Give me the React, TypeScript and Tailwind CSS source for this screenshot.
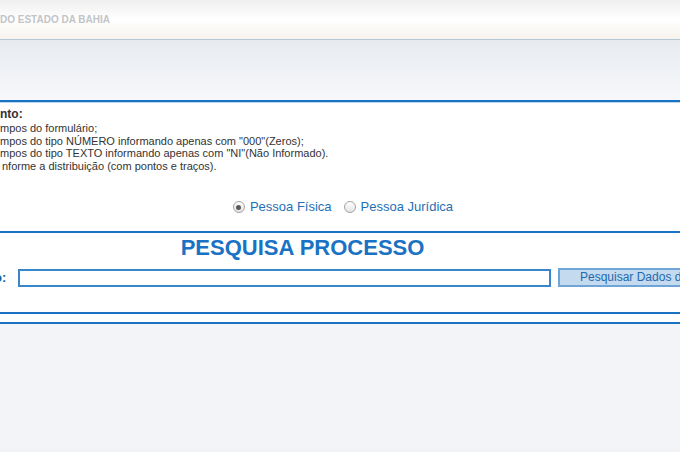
function Radio({ checked }: { checked?: boolean }) {
  return (
    <span className="flex h-[12px] w-[12px] shrink-0 items-center justify-center rounded-full border border-[#a3a3a3] bg-gradient-to-b from-white to-[#e4e4e4]">
      {checked && <span className="h-[5px] w-[5px] rounded-full bg-[#5a5a5a]" />}
    </span>
  );
}

export default function App() {
  return (
    <div className="h-[452px] w-[680px] overflow-hidden bg-gradient-to-b from-[#f8f9fd] to-[#f2f3f7] font-['Liberation_Sans',Arial,sans-serif]">
      <header className="flex h-[39px] items-center bg-gradient-to-b from-[#efefef] via-white to-[#f6f3ee]">
        <span className="whitespace-nowrap text-[10px] font-bold text-[#c2c4c8]">DO ESTADO DA BAHIA</span>
      </header>
      <div className="h-[1px] bg-[#b6c6d3]" />
      <div className="h-[60px] bg-gradient-to-b from-[#e7ebf0] to-[#f7f8fb]" />

      <main className="bg-white">
        <div className="h-[2px] bg-[#1a72c2]" />
        <div className="h-px bg-[#b9d6ee]" />

        <section className="whitespace-nowrap pt-[4px] text-[#333]">
          <p className="text-[12px] font-bold leading-[15px]">nto:</p>
          <ul className="text-[11px] leading-[12.5px]">
            <li>mpos do formulário;</li>
            <li>mpos do tipo NÚMERO informando apenas com "000"(Zeros);</li>
            <li>mpos do tipo TEXTO informando apenas com "NI"(Não Informado).</li>
            <li className="pl-[2px]">nforme a distribuição (com pontos e traços).</li>
          </ul>
        </section>

        <div className="mt-[27px] mb-[16px] flex h-[16px] items-center justify-center gap-[5px] pl-[6px] text-[13px] text-[#1f6fb5]">
          <Radio checked />
          <span>Pessoa Física</span>
          <span className="ml-[2px]" />
          <Radio />
          <span>Pessoa Jurídica</span>
        </div>

        <section className="border-y-2 border-[#1a72c2] pt-[3px] pb-[24px]">
          <h1 className="w-[605px] text-center text-[22px] font-bold leading-[24px] text-[#1a72c4]">PESQUISA PROCESSO</h1>
          <div className="mt-[8px] flex items-center whitespace-nowrap">
            <label className="-ml-[6px] w-[24px] shrink-0 text-[13px] font-bold text-[#1b5fa0]">o:</label>
            <input className="h-[18px] w-[533px] shrink-0 border-2 border-[#3a86ca] bg-white outline-none" />
            <button className="ml-[7px] h-[19px] w-[220px] shrink-0 whitespace-nowrap border-2 border-[#6ea5d6] bg-[#c4daee] pl-[20px] text-left text-[12px] leading-[15px] text-[#2269ae]">
              Pesquisar Dados do Processo
            </button>
          </div>
        </section>
        <div className="h-[8px]" />
        <div className="h-[2px] bg-[#1a72c2]" />
      </main>
    </div>
  );
}
